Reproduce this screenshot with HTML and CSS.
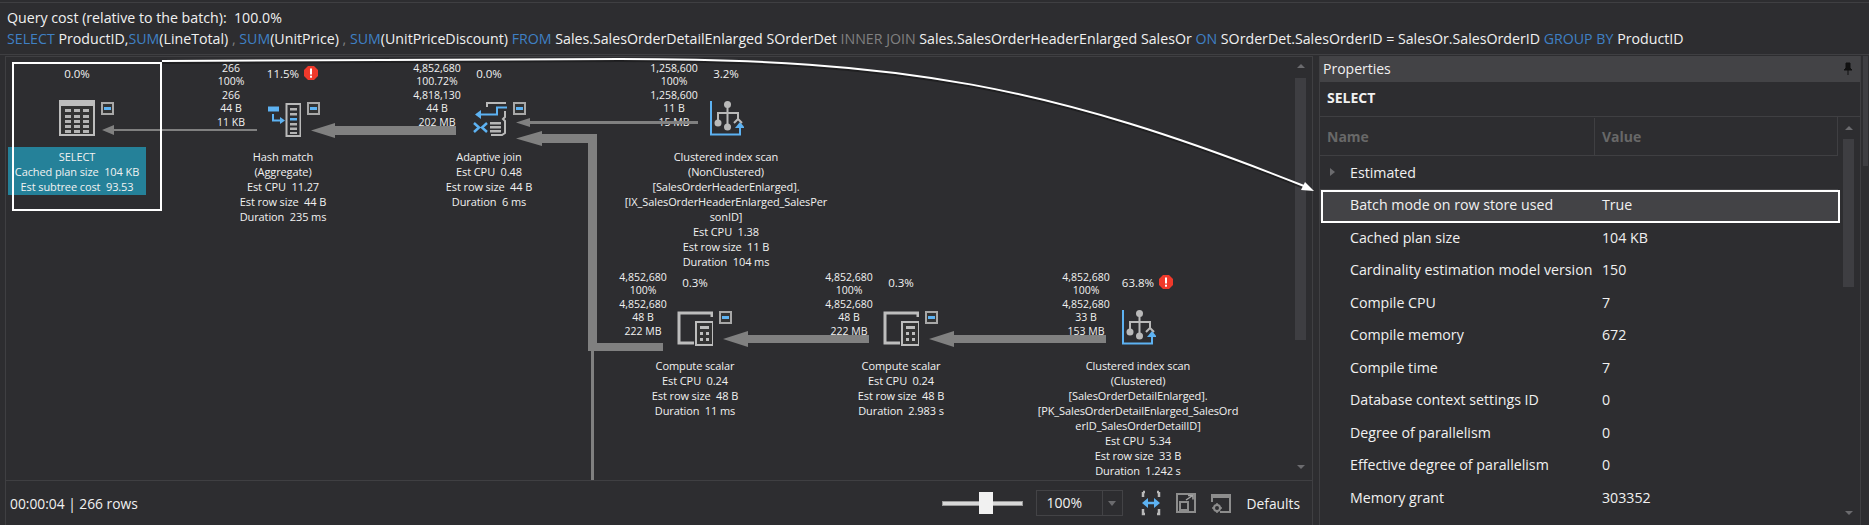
FILE: index.html
```html
<!DOCTYPE html>
<html lang="en">
<head>
<meta charset="utf-8">
<title>Execution plan</title>
<link rel="stylesheet" href="styles.css">
</head>
<body>
<header class="query">
  <div class="query-line">Query cost (relative to the batch):  100.0%</div>
  <div class="query-line"><span class="kw">SELECT</span> ProductID,<span class="kw">SUM</span>(LineTotal) <span class="dim">,</span> <span class="kw">SUM</span>(UnitPrice) <span class="dim">,</span> <span class="kw">SUM</span>(UnitPriceDiscount) <span class="kw">FROM</span> Sales.SalesOrderDetailEnlarged SOrderDet <span class="dim">INNER JOIN</span> Sales.SalesOrderHeaderEnlarged SalesOr <span class="kw">ON</span> SOrderDet.SalesOrderID = SalesOr.SalesOrderID <span class="kw">GROUP BY</span> ProductID</div>
</header>
<main class="main">
  <section class="plan">
    <div class="plan-body">
      <div class="canvas">
        <article class="node n-select">
          <div class="pct"><span class="pct-v">0.0%</span></div>
          <div class="icon">
            <svg width="36" height="37" viewBox="0 0 36 37"><rect x="1" y="1" width="34" height="34" fill="#333" stroke="#bdbdbd" stroke-width="2"/><rect x="1" y="1" width="34" height="5" fill="#bdbdbd"/><g fill="#b4b4b4"><rect x="6" y="9" width="6" height="3"/><rect x="15" y="9" width="6" height="3"/><rect x="24" y="9" width="6" height="3"/><rect x="6" y="15" width="6" height="3"/><rect x="15" y="15" width="6" height="3"/><rect x="24" y="15" width="6" height="3"/><rect x="6" y="20" width="6" height="3"/><rect x="15" y="20" width="6" height="3"/><rect x="24" y="20" width="6" height="3"/><rect x="6" y="25" width="6" height="3"/><rect x="15" y="25" width="6" height="3"/><rect x="24" y="25" width="6" height="3"/><rect x="6" y="30" width="6" height="3"/><rect x="15" y="30" width="6" height="3"/><rect x="24" y="30" width="6" height="3"/></g></svg>
            <span class="minus"></span>
          </div>
          <div class="label label-sel">SELECT
Cached plan size  104 KB
Est subtree cost  93.53</div>
        </article>

        <article class="node n-hash">
          <div class="stats">266
100%
266
44 B
11 KB</div>
          <div class="pct"><span class="pct-v">11.5%<svg class="err" width="14" height="14" viewBox="0 0 14 14"><path d="M4 0h6l4 4v6l-4 4H4l-4-4V4z" fill="#f0392b"/><rect x="6" y="2.5" width="2" height="6" fill="#fff"/><rect x="6" y="9.7" width="2" height="2" fill="#fff"/></svg></span></div>
          <div class="icon">
            <svg width="36" height="37" viewBox="0 0 36 37"><rect x="3" y="6.5" width="11" height="5" fill="#5db2f2"/><path d="M8 14v6.500h9" fill="none" stroke="#5db2f2" stroke-width="2"/><path d="M15 17l5 3.500-5 3.500z" fill="#5db2f2"/><rect x="21.500" y="4" width="14" height="32" fill="none" stroke="#b9b9b9" stroke-width="2"/><g fill="#b4b4b4"><rect x="25" y="8" width="7" height="2.500"/><rect x="25" y="13" width="7" height="2.500"/><rect x="25" y="23" width="7" height="2.500"/><rect x="25" y="27.500" width="7" height="2.500"/><rect x="25" y="32" width="7" height="2"/></g><rect x="25" y="18" width="7" height="2.500" fill="#5db2f2"/></svg>
            <span class="minus"></span>
          </div>
          <div class="label">Hash match
(Aggregate)
Est CPU  11.27
Est row size  44 B
Duration  235 ms</div>
        </article>

        <article class="node n-join">
          <div class="stats">4,852,680
100.72%
4,818,130
44 B
202 MB</div>
          <div class="pct"><span class="pct-v">0.0%</span></div>
          <div class="icon">
            <svg width="36" height="37" viewBox="0 0 36 37"><path d="M16 7V3h19" fill="none" stroke="#b9b9b9" stroke-width="2"/><path d="M34 11v6l-2 2 2 2v12l-3 2H20" fill="none" stroke="#b9b9b9" stroke-width="2"/><path d="M36 7.500H26v7H8" fill="none" stroke="#5db2f2" stroke-width="2"/><path d="M10 10l-6 4.500 6 4.500z" fill="#5db2f2"/><path d="M3 23l5 4.500-5 4.500M16 23l-5 4.500 5 4.500" fill="none" stroke="#5db2f2" stroke-width="2.500"/><g fill="#b4b4b4"><rect x="19" y="22" width="11" height="2.500"/><rect x="19" y="26" width="11" height="2.500"/><rect x="19" y="30" width="11" height="2.500"/></g></svg>
            <span class="minus"></span>
          </div>
          <div class="label">Adaptive join
Est CPU  0.48
Est row size  44 B
Duration  6 ms</div>
        </article>

        <article class="node n-scan1">
          <div class="stats">1,258,600
100%
1,258,600
11 B
15 MB</div>
          <div class="pct"><span class="pct-v">3.2%</span></div>
          <div class="icon">
            <svg width="36" height="37" viewBox="0 0 36 37"><path d="M3 1v33.500h29V26" fill="none" stroke="#5db2f2" stroke-width="2"/><path d="M32 22l-5 6h10z" fill="#5db2f2"/><g fill="#b9b9b9"><circle cx="19.500" cy="4.500" r="3.500"/><circle cx="10" cy="23" r="3.500"/><circle cx="19.500" cy="27" r="3.500"/></g><path d="M19.500 6v20M10 22v-9h20v7M26 23l4-4 4 4" fill="none" stroke="#b9b9b9" stroke-width="2"/></svg>
          </div>
          <div class="label">Clustered index scan
(NonClustered)
[SalesOrderHeaderEnlarged].
[IX_SalesOrderHeaderEnlarged_SalesPer
sonID]
Est CPU  1.38
Est row size  11 B
Duration  104 ms</div>
        </article>

        <article class="node n-comp1">
          <div class="stats">4,852,680
100%
4,852,680
48 B
222 MB</div>
          <div class="pct"><span class="pct-v">0.3%</span></div>
          <div class="icon">
            <svg width="36" height="37" viewBox="0 0 36 37"><path d="M35 8V4H2v30h15" fill="none" stroke="#bdbdbd" stroke-width="3"/><rect x="19" y="13" width="17" height="23" fill="#333" stroke="#bdbdbd" stroke-width="2"/><g fill="#bdbdbd"><rect x="23" y="17" width="9" height="3"/><rect x="23" y="23" width="3" height="3"/><rect x="29" y="23" width="3" height="3"/><rect x="23" y="29" width="3" height="3"/><rect x="29" y="29" width="3" height="3"/></g></svg>
            <span class="minus"></span>
          </div>
          <div class="label">Compute scalar
Est CPU  0.24
Est row size  48 B
Duration  11 ms</div>
        </article>

        <article class="node n-comp2">
          <div class="stats">4,852,680
100%
4,852,680
48 B
222 MB</div>
          <div class="pct"><span class="pct-v">0.3%</span></div>
          <div class="icon">
            <svg width="36" height="37" viewBox="0 0 36 37"><path d="M35 8V4H2v30h15" fill="none" stroke="#bdbdbd" stroke-width="3"/><rect x="19" y="13" width="17" height="23" fill="#333" stroke="#bdbdbd" stroke-width="2"/><g fill="#bdbdbd"><rect x="23" y="17" width="9" height="3"/><rect x="23" y="23" width="3" height="3"/><rect x="29" y="23" width="3" height="3"/><rect x="23" y="29" width="3" height="3"/><rect x="29" y="29" width="3" height="3"/></g></svg>
            <span class="minus"></span>
          </div>
          <div class="label">Compute scalar
Est CPU  0.24
Est row size  48 B
Duration  2.983 s</div>
        </article>

        <article class="node n-scan2">
          <div class="stats">4,852,680
100%
4,852,680
33 B
153 MB</div>
          <div class="pct"><span class="pct-v">63.8%<svg class="err" width="14" height="14" viewBox="0 0 14 14"><path d="M4 0h6l4 4v6l-4 4H4l-4-4V4z" fill="#f0392b"/><rect x="6" y="2.500" width="2" height="6" fill="#fff"/><rect x="6" y="9.700" width="2" height="2" fill="#fff"/></svg></span></div>
          <div class="icon">
            <svg width="36" height="37" viewBox="0 0 36 37"><path d="M3 1v33.500h29V26" fill="none" stroke="#5db2f2" stroke-width="2"/><path d="M32 22l-5 6h10z" fill="#5db2f2"/><g fill="#b9b9b9"><circle cx="19.500" cy="4.500" r="3.500"/><circle cx="10" cy="23" r="3.500"/><circle cx="19.500" cy="27" r="3.500"/></g><path d="M19.500 6v20M10 22v-9h20v7M26 23l4-4 4 4" fill="none" stroke="#b9b9b9" stroke-width="2"/></svg>
          </div>
          <div class="label">Clustered index scan
(Clustered)
[SalesOrderDetailEnlarged].
[PK_SalesOrderDetailEnlarged_SalesOrd
erID_SalesOrderDetailID]
Est CPU  5.34
Est row size  33 B
Duration  1.242 s</div>
        </article>

        <svg class="edges" width="1289" height="424" viewBox="6 57 1289 424">
          <g fill="#808080">
            <path d="M257 129h-143v-4l-12 5 12 5v-4h143z"/>
            <path d="M456 126H335v-3l-24 7.500 24 7.500v-3h121z"/>
            <path d="M698 121H530v-3l-14 4.500 14 4.500v-3h168z"/>
            <path d="M663 343H597V134H542v-3l-26 7.500 26 7.500v-3h46v208h75z"/>
            <rect x="591" y="351" width="3" height="129"/>
            <path d="M869 335H748v-4l-25 8 25 8v-4h121z"/>
            <path d="M1106 335H954v-4l-25 8 25 8v-4h152z"/>
          </g>
        </svg>
      </div>
      <div class="vscroll plan-scroll">
        <span class="arrow-up"></span>
        <span class="thumb"></span>
        <span class="arrow-down"></span>
      </div>
    </div>
    <footer class="plan-foot">
      <span class="status">00:00:04 | 266 rows</span>
      <div class="tools">
        <div class="slider"><span class="slider-thumb"></span></div>
        <div class="combo"><span class="combo-v">100%</span><span class="combo-btn"></span></div>
        <svg class="tool" width="20" height="26" viewBox="0 0 20 26"><path d="M2 2h2M2 2v5M2 19v5h2M18 2h-2M18 2v5M18 19v5h-2" fill="none" stroke="#b9b9b9" stroke-width="2.500"/><path d="M5 13h10" stroke="#5db2f2" stroke-width="2.500"/><path d="M7 8l-6 5 6 5zM13 8l6 5-6 5z" fill="#5db2f2"/></svg>
        <svg class="tool" width="20" height="26" viewBox="0 0 20 26"><rect x="1" y="4" width="18" height="18" fill="none" stroke="#8d8d8d" stroke-width="2"/><rect x="4" y="12" width="8" height="8" fill="none" stroke="#8d8d8d" stroke-width="2"/><path d="M10 10l6-4M12 5.500h5v4" fill="none" stroke="#a5a5a5" stroke-width="1.500"/></svg>
        <svg class="tool" width="20" height="26" viewBox="0 0 20 26"><path d="M1 12V5h18v17H9" fill="none" stroke="#8d8d8d" stroke-width="2"/><rect x="1" y="5" width="18" height="3" fill="#8d8d8d"/><circle cx="6" cy="18" r="3" fill="none" stroke="#8d8d8d" stroke-width="2"/><path d="M6 13v2M6 21v2M1 18h2M9 18h2" stroke="#8d8d8d" stroke-width="1.500"/></svg>
        <span class="defaults">Defaults</span>
      </div>
    </footer>
  </section>

  <aside class="props">
    <div class="props-title"><span>Properties</span><svg width="10" height="13" viewBox="0 0 10 13"><path d="M3 1h4v5l2 2H1l2-2zM5 8v5" fill="#111" stroke="#111"/></svg></div>
    <div class="props-sel">SELECT</div>
    <div class="props-body">
      <div class="grid">
        <div class="grid-head"><span class="col-name">Name</span><span class="col-value">Value</span></div>
        <div class="row"><span class="r-name r-exp">Estimated</span></div>
        <div class="row row-hl"><span class="r-name">Batch mode on row store used</span><span class="r-val">True</span></div>
        <div class="row"><span class="r-name">Cached plan size</span><span class="r-val">104 KB</span></div>
        <div class="row"><span class="r-name">Cardinality estimation model version</span><span class="r-val">150</span></div>
        <div class="row"><span class="r-name">Compile CPU</span><span class="r-val">7</span></div>
        <div class="row"><span class="r-name">Compile memory</span><span class="r-val">672</span></div>
        <div class="row"><span class="r-name">Compile time</span><span class="r-val">7</span></div>
        <div class="row"><span class="r-name">Database context settings ID</span><span class="r-val">0</span></div>
        <div class="row"><span class="r-name">Degree of parallelism</span><span class="r-val">0</span></div>
        <div class="row"><span class="r-name">Effective degree of parallelism</span><span class="r-val">0</span></div>
        <div class="row"><span class="r-name">Memory grant</span><span class="r-val">303352</span></div>
      </div>
      <div class="vscroll props-scroll">
        <span class="arrow-up"></span>
        <span class="thumb"></span>
        <span class="arrow-down"></span>
      </div>
    </div>
  </aside>
  <div class="side-edge"></div>
</main>
<svg class="callout" width="1869" height="525" viewBox="0 0 1869 525">
  <rect x="13" y="63" width="148" height="147" fill="none" stroke="#fff" stroke-width="2"/>
  <path d="M162 61 L 620 59 C 900 59, 1050 85, 1304 186" fill="none" stroke="#111" stroke-opacity=".5" stroke-width="2" transform="translate(0 2)"/>
  <path d="M162 61 L 620 59 C 900 59, 1050 85, 1304 186" fill="none" stroke="#fff" stroke-width="2"/>
  <path d="M1314 191l-13-1 4-8z" fill="#fff"/>
  <rect x="1322" y="191" width="517" height="31" fill="none" stroke="#fff" stroke-width="2"/>
</svg>
</body>
</html>
```
FILE: styles.css
```css
* { box-sizing: border-box; }
html, body { margin: 0; height: 525px; overflow: hidden; }
body {
  position: relative;
  display: flex;
  flex-direction: column;
  background: #2d2d30;
  color: #f1f1f1;
  font-family: "Open Sans", "Noto Sans", sans-serif;
}
.query {
  flex: none;
  height: 53px;
  margin-top: 2px;
  padding: 4px 0 0 7px;
  border-top: 1px solid #3f3f42;
  border-bottom: 1px solid #3f3f42;
  font-size: 14.200px;
  line-height: 21px;
}
.query-line { white-space: pre; }
.kw { color: #3f80c4; }
.dim { color: #808080; }

.main { flex: 1; display: flex; padding: 1px 0 0 5px; min-height: 0; }

.plan {
  width: 1308px;
  display: flex;
  flex-direction: column;
  border-left: 1px solid #3f3f42;
  border-top: 1px solid #3f3f42;
  border-right: 1px solid #3f3f42;
}
.plan-body { flex: none; height: 424px; display: flex; border-bottom: 1px solid #3f3f42; }
.canvas { position: relative; flex: 1; overflow: hidden; min-width: 0; }
.edges { position: absolute; left: 0; top: 0; z-index: 2; }

.node {
  position: absolute;
  width: 240px;
  margin-left: -120px;
  top: 9px;
  display: flex;
  flex-direction: column;
  align-items: center;
  font-size: 11px;
}
.n-select { left: 71px; }
.n-hash { left: 277px; }
.n-join { left: 483px; }
.n-scan1 { left: 720px; }
.n-comp1 { left: 689px; top: 218px; }
.n-comp2 { left: 895px; top: 218px; }
.n-scan2 { left: 1132px; top: 218px; }

.stats {
  position: absolute;
  left: 18px;
  top: -4px;
  width: 100px;
  text-align: center;
  font-size: 10.500px;
  line-height: 13.400px;
  white-space: pre;
}
.pct { height: 16px; line-height: 16px; font-size: 11.500px; }
.pct-v { position: relative; display: block; }
.err { position: absolute; left: calc(100% + 5px); top: 0; }
.icon { position: relative; width: 36px; height: 37px; margin-top: 18px; }
.icon svg { display: block; }
.minus {
  position: absolute;
  left: 42px;
  top: 2px;
  width: 13px;
  height: 13px;
  border: 2px solid #a8a8a8;
  background: #333;
}
.minus::after {
  content: "";
  position: absolute;
  left: 1px;
  right: 1px;
  top: 3px;
  height: 3px;
  background: #5db2f2;
}
.label {
  margin-top: 12px;
  text-align: center;
  line-height: 15px;
  white-space: pre;
  letter-spacing: -0.1px;
}
.label-sel {
  width: 138px;
  margin-top: 10px;
  padding: 2px 0 1px;
  background: #258199;
}

.vscroll { display: flex; flex-direction: column; align-items: center; width: 11px; background: #2d2d30; }
.thumb { width: 11px; background: #3e3e42; }
.arrow-up, .arrow-down { width: 0; height: 0; border-left: 4px solid transparent; border-right: 4px solid transparent; }
.arrow-up { border-bottom: 4px solid #6b6b6e; }
.arrow-down { border-top: 4px solid #6b6b6e; }
.plan-scroll { margin-right: 6px; padding-top: 7px; }
.plan-scroll .thumb { height: 262px; margin-top: 10px; }
.plan-scroll .arrow-down { margin-top: 125px; }
.props-scroll { margin: 0 6px 0 5px; padding-top: 9px; }
.props-scroll .thumb { height: 148px; margin-top: 9px; }
.props-scroll .arrow-down { margin-top: 224px; }

.plan-foot {
  flex: 1;
  display: flex;
  align-items: center;
  justify-content: space-between;
  padding: 0 12px 0 4px;
  font-size: 13.800px;
}
.tools { display: flex; align-items: center; }
.slider { position: relative; width: 81px; height: 5px; background: #d8d8d8; border: 1px solid #9a9a9a; }
.slider-thumb { position: absolute; left: 36px; top: -10px; width: 14px; height: 22px; background: #f1f1f1; }
.combo {
  display: flex;
  width: 87px;
  height: 26px;
  margin-left: 13px;
  border: 1px solid #434346;
}
.combo-v { width: 66px; padding-left: 9px; line-height: 24px; font-size: 14px; border-right: 1px solid #434346; }
.combo-btn { flex: 1; position: relative; }
.combo-btn::after {
  content: "";
  position: absolute;
  left: 5px;
  top: 10px;
  border-left: 4px solid transparent;
  border-right: 4px solid transparent;
  border-top: 5px solid #6b6b6e;
}
.tool { margin-left: 15px; }
.tool:first-of-type { margin-left: 18px; }
.defaults { margin-left: 15px; }

.props {
  flex: none;
  width: 542px;
  margin-left: 6px;
  display: flex;
  flex-direction: column;
  border-left: 1px solid #3f3f42;
  border-right: 1px solid #3f3f42;
}
.props-title {
  flex: none;
  height: 26px;
  padding: 0 7px 2px 3px;
  display: flex;
  align-items: center;
  justify-content: space-between;
  background: #434346;
  font-size: 14px;
}
.props-sel {
  flex: none;
  height: 35px;
  padding-left: 7px;
  line-height: 32px;
  font-size: 14px;
  font-weight: 700;
  border-bottom: 1px solid #3f3f42;
}
.props-body { flex: 1; display: flex; min-height: 0; }
.grid { flex: 1; min-width: 0; font-size: 14.200px; }
.grid-head {
  display: flex;
  height: 39px;
  align-items: center;
  font-weight: 700;
  color: #686868;
  font-size: 14px;
  padding-top: 1px;
  border-bottom: 1px solid #3f3f42;
  border-right: 1px solid #3f3f42;
}
.col-name { width: 275px; height: 100%; padding-left: 7px; line-height: 38px; border-right: 1px solid #3f3f42; }
.col-value { padding-left: 7px; }
.row { display: flex; height: 32.500px; align-items: center; white-space: nowrap; }
.r-name { width: 282px; padding-left: 30px; }
.r-val { color: #f1f1f1; }
.r-exp { position: relative; }
.r-exp::before {
  content: "";
  position: absolute;
  left: 10px;
  top: 5px;
  border-top: 4px solid transparent;
  border-bottom: 4px solid transparent;
  border-left: 5px solid #6b6b6e;
}
.row-hl { background: #434346; }
.side-edge { flex: none; width: 5px; height: 110px; margin-left: 2px; background: #3e3e42; }

.callout { position: absolute; left: 0; top: 0; z-index: 5; pointer-events: none; }
```
